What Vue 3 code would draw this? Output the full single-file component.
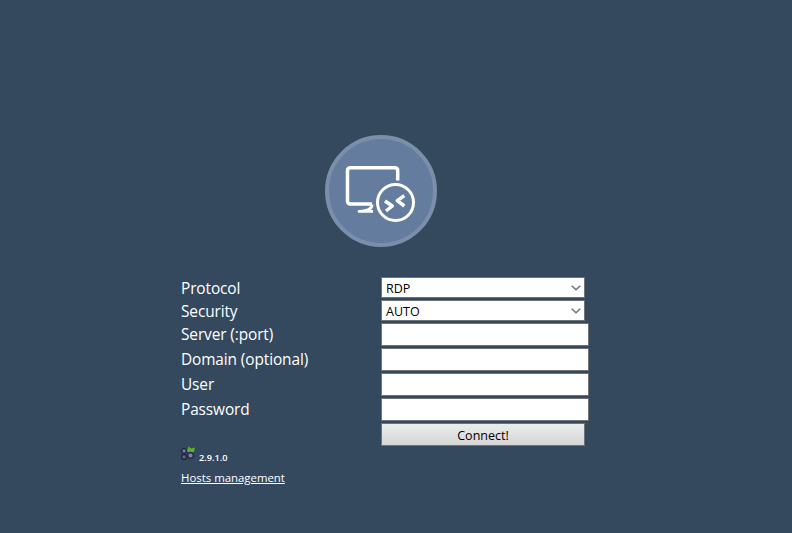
<template>
  <div class="page">
    <div class="login">
      <div class="logo">
        <svg width="112" height="112" viewBox="0 0 112 112">
          <circle cx="56" cy="56" r="54" fill="#647d9f" stroke="#7a8fa9" stroke-width="4" />
          <g fill="none" stroke="#fff" stroke-width="3.500" stroke-linejoin="round">
            <path d="M47 69H25.500Q22.500 69 22.500 66V35.500Q22.500 32.700 25.500 32.700H69.700Q72.700 32.700 72.700 35.500V45.500" />
            <path d="M47 69.500Q47.500 75.500 34 76.300H48" stroke-width="2.800" />
            <circle cx="70.500" cy="67.500" r="18" stroke-width="3" />
            <path d="M60 66 67.300 71 61 76" />
            <path d="M79.300 60.700 72.300 65.700 79.300 71" />
          </g>
        </svg>
      </div>
      <form class="fields" @submit.prevent>
        <label>Protocol</label>
        <select v-model="protocol">
          <option v-for="item in protocols" :key="item">{{ item }}</option>
        </select>
        <label>Security</label>
        <select v-model="security">
          <option v-for="item in securityModes" :key="item">{{ item }}</option>
        </select>
        <label>Server (:port)</label>
        <input type="text" />
        <label>Domain (optional)</label>
        <input type="text" />
        <label>User</label>
        <input type="text" />
        <label>Password</label>
        <input type="password" />
        <span></span>
        <button type="submit">Connect!</button>
      </form>
      <div class="version">
        <svg class="berries" width="15" height="15" viewBox="0 0 15 15">
          <path d="M6 5 7.500 .5 10 2.500 14 1.500 13 6 8.500 7Z" fill="#5cb02f" />
          <circle cx="3" cy="5" r="3" fill="#23283f" />
          <circle cx="3" cy="11" r="3.200" fill="#23283f" />
          <circle cx="9.500" cy="9.500" r="3.800" fill="#2b3050" />
          <circle cx="3" cy="5" r="1.700" fill="#6d78aa" />
          <circle cx="3" cy="11" r="1.700" fill="#5a6494" />
          <circle cx="9.500" cy="9.500" r="2" fill="#7882b4" />
        </svg>
        <span>2.9.1.0</span>
      </div>
      <a class="hosts" href="#">Hosts management</a>
    </div>
  </div>
</template>

<script setup>
import { ref } from 'vue'

const protocols = ['RDP', 'VNC', 'SSH']
const securityModes = ['AUTO', 'NLA', 'TLS', 'RDP']
const protocol = ref('RDP')
const security = ref('AUTO')
</script>

<style>
html,
body {
  margin: 0;
  background: #35495e;
}
</style>

<style scoped>
.page {
  min-height: 533px;
  box-sizing: border-box;
  padding: 135px 0 0 181px;
  background: #35495e;
  font-family: "Open Sans", "Noto Sans", sans-serif;
  color: #fff;
  overflow: hidden;
}

.login {
  width: 408px;
}

.logo {
  width: 400px;
  height: 112px;
  display: flex;
  justify-content: center;
  margin-bottom: 30px;
}

.fields {
  display: grid;
  grid-template-columns: 200px 208px;
  row-gap: 2px;
  align-items: start;
}

label {
  padding-top: 1px;
  margin-bottom: -1px;
  font-size: 15.400px;
  letter-spacing: -0.1px;
  line-height: 21px;
}

select,
input,
button {
  box-sizing: border-box;
  margin: 0;
  border: 1px solid #707276;
  border-radius: 0;
  font-family: "Open Sans", "Noto Sans", sans-serif;
  font-size: 12.500px;
  color: #000;
}

select {
  appearance: none;
  width: 204px;
  height: 21px;
  padding: 1px 0 0 4px;
  background: #fff url("data:image/svg+xml,%3Csvg xmlns='http://www.w3.org/2000/svg' width='10' height='6'%3E%3Cpath d='M.7.7 5 4.800 9.300.7' fill='none' stroke='%23707276' stroke-width='1.500'/%3E%3C/svg%3E") no-repeat right 3px center;
}

input {
  width: 208px;
  height: 23px;
  background: #fff;
}

button {
  width: 204px;
  height: 23px;
  padding: 1px 0 0;
  background: linear-gradient(#ececec, #d6d6d6);
}

.version {
  display: flex;
  align-items: flex-start;
  gap: 3px;
  height: 18px;
  font-size: 9.200px;
  font-weight: 600;
  line-height: 12px;
}

.version span {
  margin-top: 6px;
}

.berries {
  flex: none;
}

.hosts {
  display: block;
  margin-top: 6px;
  color: #fff;
  font-size: 11.400px;
  line-height: 16px;
}
</style>
